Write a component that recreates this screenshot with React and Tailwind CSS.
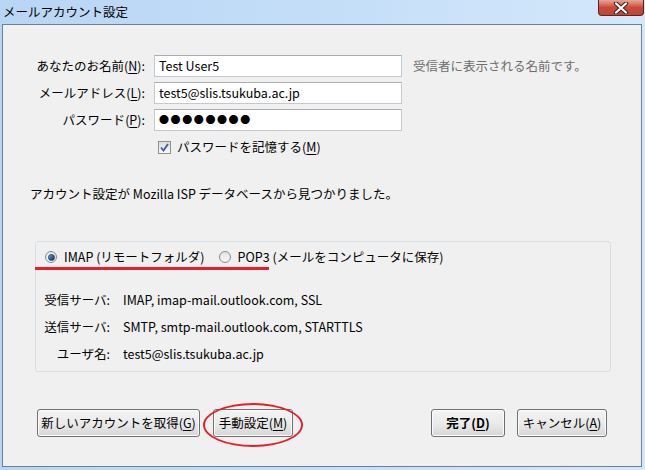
import React from 'react';

const font = { fontFamily: '"Noto Sans CJK JP", "Noto Sans", sans-serif' };

const Key = ({ k }) => (
  <>
    (<span className="underline underline-offset-2">{k}</span>)
  </>
);

const Field = ({ label, k, children }) => (
  <div className="flex items-center h-[22px]">
    <div className="w-[142px] text-right text-black whitespace-nowrap">
      {label}
      <Key k={k} />:
    </div>
    <div className="ml-[9px] w-[248px] h-[22px] bg-white border border-[#c5c9cf] border-t-[#abadb3] flex items-center pl-[4px] text-black">
      {children}
    </div>
  </div>
);

const Radio = ({ checked }) => (
  <span className="w-[12px] h-[12px] rounded-full border border-[#8a8a8a] bg-gradient-to-b from-[#e4e4e4] to-[#f8f8f8] flex items-center justify-center">
    {checked && (
      <span className="w-[7px] h-[7px] rounded-full bg-gradient-to-br from-[#6fb0e4] via-[#2a6aa8] to-[#0e3560] border border-[#1f3c5c]" />
    )}
  </span>
);

const Button = ({ children, w, bold }) => (
  <button
    className={`h-[28px] ${w} rounded-[3px] border border-[#707070] bg-gradient-to-b from-[#f3f3f3] via-[#ebebeb] to-[#d6d6d6] shadow-[inset_0_0_0_1px_#fcfcfc] text-black whitespace-nowrap ${bold ? 'font-bold' : ''}`}
  >
    {children}
  </button>
);

const InfoRow = ({ label, value }) => (
  <div className="flex items-center h-[16px]">
    <div className="w-[74px] text-right text-black">{label}</div>
    <div className="ml-[13px] text-black">{value}</div>
  </div>
);

export default function App() {
  return (
    <div
      className="w-[645px] h-[470px] bg-gradient-to-r from-[#b8d5f4] via-[#c4def8] to-[#d4e8fb] flex flex-col pl-[2px] pr-[3px] pb-[3px] text-[12.5px] leading-[16px]"
      style={font}
    >
      {/* title bar */}
      <div className="h-[24px] flex items-start justify-between">
        <div className="pl-[1px] pt-[4px] text-[12.5px] text-black">メールアカウント設定</div>
        <div className="w-[46px] h-[16px] -mr-[2px] rounded-b-[4px] border border-t-0 border-[#5a2323] bg-gradient-to-b from-[#e8a597] via-[#c9483b] to-[#c0472f] flex items-center justify-center">
          <svg width="16" height="12" viewBox="0 0 16 12">
            <path d="M3 1.5 L13 10.5 M13 1.5 L3 10.5" stroke="#3b2323" strokeWidth="4.2" strokeLinecap="round" />
            <path d="M3 1.5 L13 10.5 M13 1.5 L3 10.5" stroke="#ffffff" strokeWidth="2.2" strokeLinecap="round" />
          </svg>
        </div>
      </div>

      {/* client area */}
      <div className="flex-1 border border-[#6e8193] bg-[#f0f0f0] flex flex-col">
        <div className="pt-[30px] flex flex-col gap-[5px]">
          <div className="flex items-center">
            <Field label="あなたのお名前" k="N">Test User5</Field>
            <div className="ml-[11px] text-[#6d6d6d]">受信者に表示される名前です。</div>
          </div>
          <Field label="メールアドレス" k="L">test5@slis.tsukuba.ac.jp</Field>
          <Field label="パスワード" k="P">
            <span className="text-[10px] tracking-[1.6px]">●●●●●●●●</span>
          </Field>
        </div>

        <div className="mt-[8px] ml-[155px] flex items-center h-[16px]">
          <span className="w-[13px] h-[13px] border border-[#8f8f8f] bg-gradient-to-b from-[#dcdcdc] to-[#fafafa] flex items-center justify-center">
            <svg width="9" height="9" viewBox="0 0 9 9">
              <path d="M1 4.5 L3.5 7.5 L8 1" stroke="#3d5a9a" strokeWidth="1.8" fill="none" />
            </svg>
          </span>
          <span className="ml-[6px] text-black">
            パスワードを記憶する<Key k="M" />
          </span>
        </div>

        <div className="mt-[31px] ml-[27px] text-black">アカウント設定が Mozilla ISP データベースから見つかりました。</div>

        {/* group box */}
        <div className="relative mt-[39px] ml-[32px] w-[576px] border border-[#d5dfe5] rounded-[3px] pt-[7px] pb-[9px]">
          <div className="flex items-center h-[16px] pl-[9px]">
            <Radio checked />
            <span className="ml-[7px] text-black">IMAP (リモートフォルダ)</span>
            <span className="ml-[14px]">
              <Radio />
            </span>
            <span className="ml-[7px] text-black">POP3 (メールをコンピュータに保存)</span>
          </div>
          <div className="absolute left-[-1px] top-[25px] w-[234px] h-[3px] bg-[#e5202a]" />
          <div className="mt-[27px] flex flex-col gap-[11px]">
            <InfoRow label="受信サーバ:" value="IMAP, imap-mail.outlook.com, SSL" />
            <InfoRow label="送信サーバ:" value="SMTP, smtp-mail.outlook.com, STARTTLS" />
            <InfoRow label="ユーザ名:" value="test5@slis.tsukuba.ac.jp" />
          </div>
        </div>

        {/* buttons */}
        <div className="mt-[37px] px-[34px] flex items-center">
          <Button w="w-[163px]">
            新しいアカウントを取得<Key k="G" />
          </Button>
          <div className="relative ml-[13px]">
            <Button w="w-[80px]">
              手動設定<Key k="M" />
            </Button>
            <div className="absolute left-[-10px] top-[-6px] w-[100px] h-[44px] rounded-[50%] border-[2.5px] border-[#e5202a] pointer-events-none" />
          </div>
          <div className="flex-1" />
          <Button w="w-[74px]" bold>
            完了<Key k="D" />
          </Button>
          <div className="ml-[12px]">
            <Button w="w-[90px]">
              キャンセル<Key k="A" />
            </Button>
          </div>
        </div>
      </div>
    </div>
  );
}
